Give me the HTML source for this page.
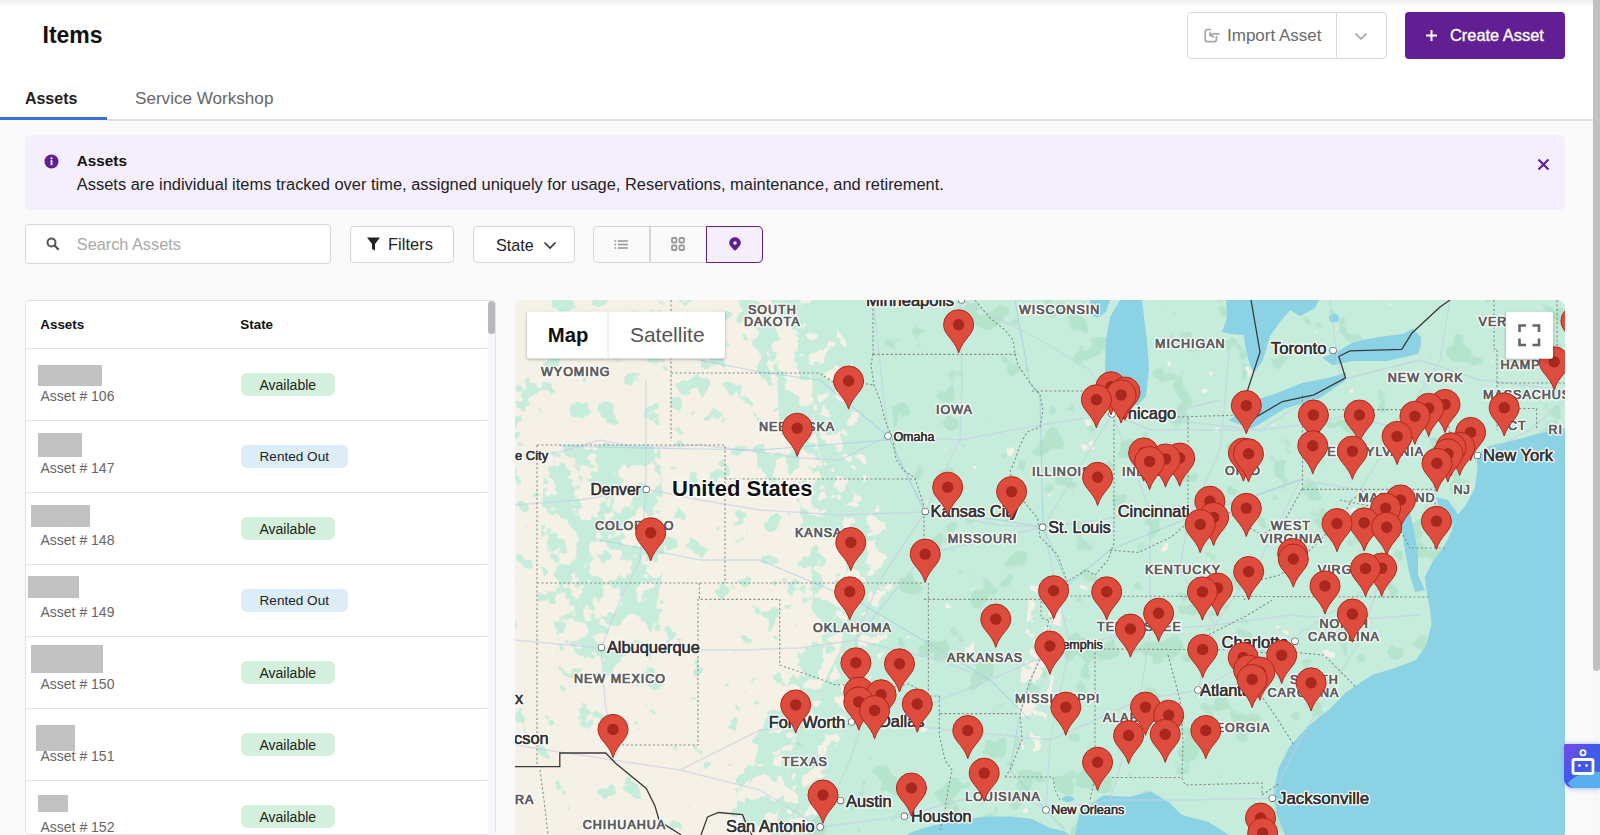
<!DOCTYPE html>
<html><head><meta charset="utf-8">
<style>
*{box-sizing:border-box;margin:0;padding:0}
html,body{width:1600px;height:835px;overflow:hidden;background:#fafafa;font-family:"Liberation Sans",sans-serif;color:#1f1f1f}
.a{position:absolute}
.t{position:absolute;line-height:1;white-space:nowrap}
.b{font-weight:bold}
</style></head>
<body>
<div class="a" style="left:0;top:0;width:1593px;height:120px;background:#fff"></div>
<div class="a" style="left:0;top:0;width:1593px;height:7px;background:linear-gradient(#ededed,#fbfbfb 70%,#fff)"></div>
<div class="t b" style="left:42.5px;top:24.1px;font-size:23px;color:#111;">Items</div>
<div class="a" style="left:1187px;top:12px;width:200px;height:47px;border:1px solid #dadada;border-radius:4px;background:#fff"></div>
<div class="a" style="left:1336px;top:13px;width:1px;height:45px;background:#dadada"></div>
<svg class="a" style="left:1203px;top:27px" width="18" height="17" viewBox="0 0 18 17"><path d="M7.5 2.5H4.2a2 2 0 0 0-2 2v8.1a2 2 0 0 0 2 2h7.2a2 2 0 0 0 2-2V9.6" fill="none" stroke="#a6a6a6" stroke-width="1.7" stroke-linecap="round"/><path d="M15.9 7.1C13 6.3 9.5 6.8 7 8.4M7.4 5.3L6.8 8.4L10.5 9.7" fill="none" stroke="#a6a6a6" stroke-width="1.7" stroke-linecap="round" stroke-linejoin="round"/></svg>
<div class="t " style="left:1227.0px;top:27.1px;font-size:17px;color:#6b6b6b;">Import Asset</div>
<svg class="a" style="left:1354px;top:32px" width="14" height="9" viewBox="0 0 14 9"><path d="M1.5 1.5l5.5 5.5 5.5-5.5" fill="none" stroke="#9a9a9a" stroke-width="1.5"/></svg>
<div class="a" style="left:1405px;top:12px;width:160px;height:47px;background:#611f93;border-radius:4px"></div>
<svg class="a" style="left:1425px;top:29px" width="13" height="13" viewBox="0 0 13 13"><path d="M6.5 1v11M1 6.5h11" stroke="#fff" stroke-width="2"/></svg>
<div class="t " style="left:1450.0px;top:27.1px;font-size:16.4px;color:#fff;-webkit-text-stroke:0.35px #fff;">Create Asset</div>
<div class="t b" style="left:24.9px;top:90.8px;font-size:16px;color:#222;">Assets</div>
<div class="t " style="left:135.0px;top:89.8px;font-size:17.1px;color:#666;">Service Workshop</div>
<div class="a" style="left:0;top:117px;width:107px;height:3px;background:#3a6fd6"></div>
<div class="a" style="left:107px;top:119px;width:1486px;height:2px;background:#e0e0e0"></div>
<div class="a" style="left:1593px;top:0;width:7px;height:835px;background:#f7f7f9"></div>
<div class="a" style="left:1593px;top:0;width:7px;height:671px;background:#c0c0c5;border-radius:0 0 4px 4px"></div>
<div class="a" style="left:25px;top:135px;width:1540px;height:75px;background:#f5effd;border-radius:5px"></div>
<svg class="a" style="left:44px;top:154px" width="15" height="15" viewBox="0 0 15 15"><circle cx="7.5" cy="7.5" r="7" fill="#611f93"/><circle cx="7.5" cy="4.3" r="1.1" fill="#fff"/><rect x="6.6" y="6.2" width="1.8" height="5" fill="#fff"/></svg>
<div class="t b" style="left:76.8px;top:152.8px;font-size:15.3px;color:#111;">Assets</div>
<div class="t " style="left:76.8px;top:175.6px;font-size:16.44px;color:#222;">Assets are individual items tracked over time, assigned uniquely for usage, Reservations, maintenance, and retirement.</div>
<svg class="a" style="left:1537px;top:158px" width="13" height="13" viewBox="0 0 13 13"><path d="M1.5 1.5l10 10M11.5 1.5l-10 10" stroke="#611f93" stroke-width="2.2"/></svg>
<div class="a" style="left:25px;top:224px;width:306px;height:40px;border:1px solid #d5d5d5;border-radius:4px;background:#fff"></div>
<svg class="a" style="left:46px;top:237px" width="14" height="14" viewBox="0 0 14 14"><circle cx="5.5" cy="5.5" r="4" fill="none" stroke="#555" stroke-width="2"/><path d="M8.5 8.5l4.2 4.2" stroke="#555" stroke-width="2.3"/></svg>
<div class="t " style="left:76.8px;top:236.2px;font-size:16.3px;color:#a9a9a9;">Search Assets</div>
<div class="a" style="left:350px;top:226px;width:104px;height:37px;border:1px solid #d5d5d5;border-radius:4px;background:#fff"></div>
<svg class="a" style="left:366px;top:236px" width="15" height="16" viewBox="0 0 15 16"><path d="M1 1.5h13L9 8v6.5L6 13V8z" fill="#222"/></svg>
<div class="t " style="left:388.0px;top:236.2px;font-size:16.5px;color:#222;">Filters</div>
<div class="a" style="left:473px;top:226px;width:102px;height:37px;border:1px solid #d5d5d5;border-radius:4px;background:#fff"></div>
<div class="t " style="left:496.0px;top:236.5px;font-size:16.2px;color:#222;">State</div>
<svg class="a" style="left:543px;top:241px" width="14" height="9" viewBox="0 0 14 9"><path d="M1.5 1.5l5.5 5.5 5.5-5.5" fill="none" stroke="#333" stroke-width="1.6"/></svg>
<div class="a" style="left:593px;top:226px;width:170px;height:37px;border:1px solid #d5d5d5;border-radius:4px;background:#fafafa"></div>
<div class="a" style="left:649px;top:227px;width:2px;height:35px;background:#d5d5d5"></div>
<div class="a" style="left:706px;top:226px;width:57px;height:37px;border:1.6px solid #611f93;border-radius:0 5px 5px 0;background:#f5effd"></div>
<svg class="a" style="left:614px;top:240px" width="14" height="9" viewBox="0 0 14 9"><g fill="#9a9a9a"><rect x="0.5" y="0.2" width="1.6" height="1.6"/><rect x="0.5" y="3.7" width="1.6" height="1.6"/><rect x="0.5" y="7.2" width="1.6" height="1.6"/><rect x="3.8" y="0.2" width="10" height="1.6"/><rect x="3.8" y="3.7" width="10" height="1.6"/><rect x="3.8" y="7.2" width="10" height="1.6"/></g></svg>
<svg class="a" style="left:671px;top:237px" width="14" height="14" viewBox="0 0 14 14"><g fill="none" stroke="#9a9a9a" stroke-width="1.8"><rect x="1" y="1" width="4.5" height="4.5" rx="1"/><rect x="8.5" y="1" width="4.5" height="4.5" rx="1"/><rect x="1" y="8.5" width="4.5" height="4.5" rx="1"/><rect x="8.5" y="8.5" width="4.5" height="4.5" rx="1"/></g></svg>
<svg class="a" style="left:728.5px;top:237px" width="12" height="14" viewBox="0 0 12 14"><path d="M6 0.2C2.8 0.2 0.2 2.7 0.2 5.8c0 3.6 5.8 8 5.8 8s5.8-4.4 5.8-8C11.8 2.7 9.2 0.2 6 0.2z" fill="#611f93"/><circle cx="6" cy="6" r="1.7" fill="#fff"/></svg>
<div class="a" style="left:25px;top:300px;width:471px;height:535px;background:#fff;border:1px solid #e2e2e2;border-radius:4px"></div>
<div class="a" style="left:488px;top:301px;width:7px;height:534px;background:#f6f6fa"></div>
<div class="a" style="left:488px;top:301px;width:7px;height:33px;background:#b8b8bc;border-radius:4px"></div>
<div class="t b" style="left:40.3px;top:318.4px;font-size:13.4px;color:#111;">Assets</div>
<div class="t b" style="left:240.3px;top:318.4px;font-size:13.4px;color:#111;">State</div>
<div class="a" style="left:26px;top:348px;width:462px;height:1px;background:#e3e3e3"></div>
<div class="a" style="left:38px;top:365px;width:64px;height:21px;background:#c2c2c2"></div>
<div class="t " style="left:40.5px;top:389.0px;font-size:14px;color:#666;">Asset # 106</div>
<div class="a" style="left:240.5px;top:372.8px;width:94px;height:23.5px;background:#d4f1dd;border-radius:6px"></div>
<div class="t " style="left:259.5px;top:377.5px;font-size:14px;color:#222;">Available</div>
<div class="a" style="left:26px;top:420px;width:462px;height:1px;background:#e3e3e3"></div>
<div class="a" style="left:38px;top:433px;width:44px;height:24px;background:#c2c2c2"></div>
<div class="t " style="left:40.5px;top:460.9px;font-size:14px;color:#666;">Asset # 147</div>
<div class="a" style="left:240.5px;top:444.8px;width:107px;height:23.5px;background:#dcedf8;border-radius:6px"></div>
<div class="t " style="left:259.5px;top:449.9px;font-size:13.6px;color:#222;">Rented Out</div>
<div class="a" style="left:26px;top:492px;width:462px;height:1px;background:#e3e3e3"></div>
<div class="a" style="left:31px;top:504.5px;width:59px;height:22.5px;background:#c2c2c2"></div>
<div class="t " style="left:40.5px;top:532.8px;font-size:14px;color:#666;">Asset # 148</div>
<div class="a" style="left:240.5px;top:516.8px;width:94px;height:23.5px;background:#d4f1dd;border-radius:6px"></div>
<div class="t " style="left:259.5px;top:521.5px;font-size:14px;color:#222;">Available</div>
<div class="a" style="left:26px;top:564px;width:462px;height:1px;background:#e3e3e3"></div>
<div class="a" style="left:28px;top:575.5px;width:51px;height:22.5px;background:#c2c2c2"></div>
<div class="t " style="left:40.5px;top:604.7px;font-size:14px;color:#666;">Asset # 149</div>
<div class="a" style="left:240.5px;top:588.8px;width:107px;height:23.5px;background:#dcedf8;border-radius:6px"></div>
<div class="t " style="left:259.5px;top:593.9px;font-size:13.6px;color:#222;">Rented Out</div>
<div class="a" style="left:26px;top:636px;width:462px;height:1px;background:#e3e3e3"></div>
<div class="a" style="left:31px;top:645px;width:71.5px;height:28px;background:#c2c2c2"></div>
<div class="t " style="left:40.5px;top:676.6px;font-size:14px;color:#666;">Asset # 150</div>
<div class="a" style="left:240.5px;top:660.8px;width:94px;height:23.5px;background:#d4f1dd;border-radius:6px"></div>
<div class="t " style="left:259.5px;top:665.5px;font-size:14px;color:#222;">Available</div>
<div class="a" style="left:26px;top:708px;width:462px;height:1px;background:#e3e3e3"></div>
<div class="a" style="left:35.5px;top:725px;width:39.0px;height:26px;background:#c2c2c2"></div>
<div class="t " style="left:40.5px;top:748.5px;font-size:14px;color:#666;">Asset # 151</div>
<div class="a" style="left:240.5px;top:732.8px;width:94px;height:23.5px;background:#d4f1dd;border-radius:6px"></div>
<div class="t " style="left:259.5px;top:737.5px;font-size:14px;color:#222;">Available</div>
<div class="a" style="left:26px;top:780px;width:462px;height:1px;background:#e3e3e3"></div>
<div class="a" style="left:38px;top:795px;width:29.5px;height:17px;background:#c2c2c2"></div>
<div class="t " style="left:40.5px;top:820.4px;font-size:14px;color:#666;">Asset # 152</div>
<div class="a" style="left:240.5px;top:804.8px;width:94px;height:23.5px;background:#d4f1dd;border-radius:6px"></div>
<div class="t " style="left:259.5px;top:809.5px;font-size:14px;color:#222;">Available</div>
<svg class="a" style="left:515px;top:300px" width="1050" height="535" viewBox="515 300 1050 535">
<defs><clipPath id="mc"><rect x="515" y="300" width="1050" height="540" rx="8"/></clipPath>
<path id="pin" d="M0 28.2C-2 21-6 16.5-10 11.5C-13 8-15 4-15 0A15 15 0 1 1 15 0C15 4 13 8 10 11.5C6 16.5 2 21 0 28.2Z"/>
</defs>
<g clip-path="url(#mc)">
<rect x="515" y="300" width="1050" height="535" fill="#f5f1e7"/>
<polygon points="770.0,300.0 800.0,340.0 812.0,380.0 815.0,430.0 825.0,480.0 845.0,540.0 848.0,600.0 840.0,650.0 820.0,690.0 800.0,720.0 790.0,760.0 780.0,800.0 775.0,835.0 1565.0,835.0 1565.0,300.0" fill="#c6ecdb"/>
<g id="west"></g>
<defs>
<filter id="g55" filterUnits="userSpaceOnUse" x="515" y="300" width="1050" height="535" color-interpolation-filters="sRGB"><feTurbulence type="fractalNoise" baseFrequency="0.045" numOctaves="3" seed="7"/><feColorMatrix type="matrix" values="0 0 0 0 0.776 0 0 0 0 0.925 0 0 0 0 0.859 25 0 0 0 -12.000"/><feComposite in2="SourceAlpha" operator="in"/></filter>
<filter id="g45" filterUnits="userSpaceOnUse" x="515" y="300" width="1050" height="535" color-interpolation-filters="sRGB"><feTurbulence type="fractalNoise" baseFrequency="0.045" numOctaves="3" seed="7"/><feColorMatrix type="matrix" values="0 0 0 0 0.776 0 0 0 0 0.925 0 0 0 0 0.859 25 0 0 0 -11.750"/><feComposite in2="SourceAlpha" operator="in"/></filter>
<filter id="g30" filterUnits="userSpaceOnUse" x="515" y="300" width="1050" height="535" color-interpolation-filters="sRGB"><feTurbulence type="fractalNoise" baseFrequency="0.045" numOctaves="3" seed="7"/><feColorMatrix type="matrix" values="0 0 0 0 0.776 0 0 0 0 0.925 0 0 0 0 0.859 25 0 0 0 -14.000"/><feComposite in2="SourceAlpha" operator="in"/></filter>
<filter id="g20" filterUnits="userSpaceOnUse" x="515" y="300" width="1050" height="535" color-interpolation-filters="sRGB"><feTurbulence type="fractalNoise" baseFrequency="0.045" numOctaves="3" seed="7"/><feColorMatrix type="matrix" values="0 0 0 0 0.776 0 0 0 0 0.925 0 0 0 0 0.859 25 0 0 0 -15.000"/><feComposite in2="SourceAlpha" operator="in"/></filter>
<filter id="g15" filterUnits="userSpaceOnUse" x="515" y="300" width="1050" height="535" color-interpolation-filters="sRGB"><feTurbulence type="fractalNoise" baseFrequency="0.045" numOctaves="3" seed="7"/><feColorMatrix type="matrix" values="0 0 0 0 0.776 0 0 0 0 0.925 0 0 0 0 0.859 25 0 0 0 -15.375"/><feComposite in2="SourceAlpha" operator="in"/></filter>
<filter id="g8" filterUnits="userSpaceOnUse" x="515" y="300" width="1050" height="535" color-interpolation-filters="sRGB"><feTurbulence type="fractalNoise" baseFrequency="0.045" numOctaves="3" seed="7"/><feColorMatrix type="matrix" values="0 0 0 0 0.776 0 0 0 0 0.925 0 0 0 0 0.859 25 0 0 0 -16.250"/><feComposite in2="SourceAlpha" operator="in"/></filter>
<filter id="g4" filterUnits="userSpaceOnUse" x="515" y="300" width="1050" height="535" color-interpolation-filters="sRGB"><feTurbulence type="fractalNoise" baseFrequency="0.045" numOctaves="3" seed="7"/><feColorMatrix type="matrix" values="0 0 0 0 0.776 0 0 0 0 0.925 0 0 0 0 0.859 25 0 0 0 -17.250"/><feComposite in2="SourceAlpha" operator="in"/></filter>
<filter id="b8" filterUnits="userSpaceOnUse" x="515" y="300" width="1050" height="535" color-interpolation-filters="sRGB"><feTurbulence type="fractalNoise" baseFrequency="0.05" numOctaves="3" seed="21"/><feColorMatrix type="matrix" values="0 0 0 0 0.961 0 0 0 0 0.945 0 0 0 0 0.906 25 0 0 0 -19.500"/><feComposite in2="SourceAlpha" operator="in"/></filter>
<filter id="dg" filterUnits="userSpaceOnUse" x="515" y="300" width="1050" height="535" color-interpolation-filters="sRGB"><feTurbulence type="fractalNoise" baseFrequency="0.03" numOctaves="3" seed="55"/><feColorMatrix type="matrix" values="0 0 0 0 0.71 0 0 0 0 0.894 0 0 0 0 0.8 25 0 0 0 -16.000"/><feComposite in2="SourceAlpha" operator="in"/></filter>
<filter id="b50" filterUnits="userSpaceOnUse" x="515" y="300" width="1050" height="535" color-interpolation-filters="sRGB"><feTurbulence type="fractalNoise" baseFrequency="0.06" numOctaves="3" seed="77"/><feColorMatrix type="matrix" values="0 0 0 0 0.961 0 0 0 0 0.945 0 0 0 0 0.906 25 0 0 0 -12.500"/><feComposite in2="SourceAlpha" operator="in"/></filter>
<filter id="b30" filterUnits="userSpaceOnUse" x="515" y="300" width="1050" height="535" color-interpolation-filters="sRGB"><feTurbulence type="fractalNoise" baseFrequency="0.06" numOctaves="3" seed="91"/><feColorMatrix type="matrix" values="0 0 0 0 0.961 0 0 0 0 0.945 0 0 0 0 0.906 25 0 0 0 -14.250"/><feComposite in2="SourceAlpha" operator="in"/></filter>
</defs>
<polygon points="515.0,300.0 671.0,300.0 671.0,445.0 515.0,445.0" fill="#000" filter="url(#g15)"/>
<polygon points="515.0,445.0 545.0,445.0 540.0,560.0 560.0,650.0 600.0,660.0 650.0,640.0 665.0,560.0 660.0,445.0 725.0,445.0 725.0,583.0 515.0,583.0" fill="#000" filter="url(#g8)"/>
<polygon points="545.0,445.0 660.0,445.0 665.0,560.0 650.0,640.0 600.0,660.0 560.0,650.0 540.0,560.0" fill="#000" filter="url(#g45)"/>
<polygon points="671.0,300.0 800.0,300.0 810.0,370.0 810.0,470.0 725.0,479.0 725.0,445.0 671.0,445.0" fill="#000" filter="url(#g20)"/>
<polygon points="725.0,479.0 820.0,479.0 820.0,583.0 725.0,583.0" fill="#000" filter="url(#g8)"/>
<polygon points="560.0,650.0 600.0,660.0 650.0,640.0 670.0,640.0 660.0,730.0 580.0,730.0" fill="#000" filter="url(#g20)"/>
<polygon points="515.0,583.0 725.0,583.0 700.0,640.0 670.0,640.0 650.0,640.0 600.0,660.0 560.0,650.0 580.0,730.0 660.0,730.0 700.0,760.0 515.0,760.0" fill="#000" filter="url(#g8)"/>
<polygon points="700.0,583.0 820.0,583.0 800.0,650.0 750.0,700.0 720.0,835.0 515.0,835.0 515.0,760.0 700.0,760.0 660.0,730.0 670.0,640.0 700.0,640.0" fill="#000" filter="url(#g4)"/>
<polygon points="695.0,300.0 725.0,340.0 737.0,380.0 740.0,430.0 750.0,480.0 770.0,540.0 773.0,600.0 765.0,650.0 745.0,690.0 725.0,720.0 715.0,760.0 705.0,800.0 700.0,835.0 740.0,835.0 745.0,800.0 755.0,760.0 765.0,720.0 785.0,690.0 805.0,650.0 813.0,600.0 810.0,540.0 790.0,480.0 780.0,430.0 777.0,380.0 765.0,340.0 735.0,300.0" fill="#000" filter="url(#g20)"/>
<polygon points="735.0,300.0 765.0,340.0 777.0,380.0 780.0,430.0 790.0,480.0 810.0,540.0 813.0,600.0 805.0,650.0 785.0,690.0 765.0,720.0 755.0,760.0 745.0,800.0 740.0,835.0 775.0,835.0 780.0,800.0 790.0,760.0 800.0,720.0 820.0,690.0 840.0,650.0 848.0,600.0 845.0,540.0 825.0,480.0 815.0,430.0 812.0,380.0 800.0,340.0 770.0,300.0" fill="#000" filter="url(#g55)"/>
<polygon points="880.0,300.0 1565.0,300.0 1565.0,835.0 785.0,835.0 800.0,720.0 870.0,680.0 900.0,600.0 900.0,480.0" fill="#000" filter="url(#dg)"/>
<polygon points="880.0,300.0 1565.0,300.0 1565.0,835.0 785.0,835.0 800.0,720.0 870.0,680.0 900.0,600.0 900.0,480.0" fill="#000" filter="url(#b8)"/>
<polygon points="1030.0,585.0 1062.0,590.0 1060.0,640.0 1050.0,700.0 1040.0,750.0 1022.0,755.0 1018.0,700.0 1025.0,640.0" fill="#000" filter="url(#b50)"/>
<polygon points="770.0,300.0 800.0,340.0 812.0,380.0 815.0,430.0 825.0,480.0 845.0,540.0 848.0,600.0 840.0,650.0 820.0,690.0 800.0,720.0 790.0,760.0 780.0,800.0 775.0,835.0 820.0,835.0 825.0,800.0 835.0,760.0 845.0,720.0 865.0,690.0 885.0,650.0 893.0,600.0 890.0,540.0 870.0,480.0 860.0,430.0 857.0,380.0 845.0,340.0 815.0,300.0" fill="#000" filter="url(#b30)"/>
<polygon points="1565.0,428.0 1535.0,434.5 1515.0,440.0 1486.0,447.0 1476.0,457.5 1477.5,466.4 1475.0,487.4 1467.0,503.3 1456.4,516.4 1451.0,532.2 1443.3,548.0 1432.7,561.2 1424.8,577.0 1426.0,587.6 1430.0,608.7 1431.4,624.5 1426.0,645.6 1416.0,660.0 1395.0,668.0 1372.5,674.7 1346.3,692.0 1328.8,709.7 1306.9,727.2 1289.4,746.9 1278.4,768.8 1274.0,790.6 1276.3,812.5 1285.0,835.0 1565.0,835.0" fill="#8cd2e5"/>
<polygon points="906.0,835.0 915.0,831.0 932.5,825.6 958.7,820.4 985.0,816.4 1011.0,816.4 1032.0,819.0 1050.6,828.2 1063.7,830.9 1070.0,835.0" fill="#8cd2e5"/>
<polygon points="1075.0,835.0 1079.5,812.5 1103.0,795.4 1129.3,796.7 1150.3,791.5 1168.7,802.0 1181.8,815.0 1208.0,821.7 1229.0,835.0" fill="#8cd2e5"/>
<polygon points="1404.0,506.0 1409.0,508.0 1414.0,530.0 1418.0,555.0 1418.0,575.0 1425.0,590.0 1415.0,592.0 1409.0,572.0 1404.0,545.0 1401.0,520.0" fill="#8cd2e5"/>
<polygon points="1436.0,497.0 1448.0,500.0 1458.0,514.0 1452.0,526.0 1441.0,514.0" fill="#8cd2e5"/>
<polygon points="1120.0,300.0 1142.0,300.0 1144.0,317.0 1147.0,340.0 1149.0,369.0 1146.0,396.0 1138.0,405.0 1122.0,405.0 1108.0,395.0 1105.0,369.0 1106.0,340.0 1110.0,317.0" fill="#8cd2e5"/>
<polygon points="1090.0,300.0 1110.0,300.0 1106.0,312.0 1097.0,318.0 1090.0,314.0" fill="#8cd2e5"/>
<polygon points="1226.0,300.0 1319.0,300.0 1315.0,308.0 1300.0,316.0 1290.0,310.0 1280.0,322.0 1270.0,336.0 1266.0,350.0 1262.0,362.0 1254.0,372.0 1250.0,366.0 1245.0,345.0 1244.0,335.0 1230.0,334.0 1222.0,332.0 1227.0,318.0" fill="#8cd2e5"/>
<polygon points="1229.0,420.5 1251.0,429.0 1285.0,408.6 1319.0,398.4 1344.6,381.3 1346.3,372.8 1327.6,378.0 1302.0,383.0 1276.5,393.3 1256.0,400.0 1242.5,410.3" fill="#8cd2e5"/>
<polygon points="1322.5,357.5 1336.0,352.4 1353.0,342.2 1378.6,337.1 1404.0,333.7 1412.6,328.6 1421.0,337.0 1421.0,345.0 1417.7,354.0 1387.0,361.0 1353.0,361.0 1332.7,365.2" fill="#8cd2e5"/>
<ellipse cx="1334" cy="318" rx="5" ry="4.5" fill="#8cd2e5"/>
<ellipse cx="1068" cy="799" rx="6" ry="3" fill="#8cd2e5"/>
<g fill="none" stroke="#c4cfe6" stroke-width="1.4" stroke-linejoin="round" opacity="0.6">
<polyline points="515.0,455.0 560.0,452.0 600.0,440.0 640.0,448.0 700.0,445.0 760.0,452.0 800.0,458.0 840.0,460.0 888.0,436.0 960.0,440.0 1040.0,425.0 1112.0,414.0 1170.0,420.0 1260.0,430.0 1300.0,425.0 1350.0,415.0 1420.0,435.0 1477.0,456.0"/>
<polyline points="515.0,505.0 580.0,500.0 646.0,489.0 700.0,500.0 760.0,510.0 840.0,515.0 925.0,512.0 1000.0,525.0 1043.0,527.0 1100.0,520.0 1150.0,510.0 1245.0,500.0 1300.0,480.0 1360.0,490.0 1410.0,505.0"/>
<polyline points="515.0,640.0 601.0,648.0 680.0,650.0 740.0,650.0 800.0,648.0 855.0,640.0 940.0,660.0 990.0,680.0 1070.0,645.0 1150.0,630.0 1215.0,625.0 1290.0,615.0 1350.0,620.0 1420.0,615.0"/>
<polyline points="515.0,745.0 560.0,752.0 613.0,760.0 680.0,770.0 760.0,790.0 820.0,827.0 904.0,816.0 960.0,800.0 1020.0,795.0 1046.0,810.0 1110.0,800.0 1190.0,800.0 1272.0,798.0"/>
<polyline points="680.0,770.0 760.0,730.0 885.0,722.0 950.0,730.0 1050.0,740.0 1140.0,700.0 1198.0,690.0 1263.0,680.0 1320.0,670.0"/>
<polyline points="960.0,299.0 962.0,380.0 960.0,440.0 940.0,480.0 925.0,512.0 880.0,580.0 855.0,640.0 870.0,700.0 850.0,760.0 820.0,827.0"/>
<polyline points="646.0,380.0 646.0,489.0 640.0,560.0 620.0,600.0 601.0,648.0 605.0,700.0 613.0,760.0"/>
<polyline points="1198.0,690.0 1215.0,625.0 1180.0,570.0 1188.0,518.0 1220.0,450.0 1225.0,400.0 1230.0,340.0"/>
<polyline points="1112.0,414.0 1150.0,510.0 1150.0,555.0 1150.0,630.0 1140.0,700.0 1110.0,800.0"/>
<polyline points="1272.0,798.0 1300.0,740.0 1330.0,690.0 1360.0,640.0 1380.0,580.0 1395.0,520.0 1440.0,480.0 1477.0,456.0 1530.0,430.0 1565.0,400.0"/>
<polyline points="1112.0,414.0 1150.0,430.0 1260.0,430.0 1340.0,380.0 1420.0,360.0 1480.0,380.0 1565.0,390.0"/>
<polyline points="1112.0,414.0 1043.0,527.0 1070.0,645.0 1050.0,740.0 1046.0,810.0"/>
<polyline points="960.0,299.0 1040.0,340.0 1090.0,370.0 1112.0,414.0 1180.0,410.0 1220.0,400.0"/>
<polyline points="873.0,300.0 888.0,436.0 925.0,512.0"/>
<polyline points="1043.0,527.0 925.0,554.0 855.0,640.0"/>
<polyline points="885.0,722.0 990.0,680.0"/>
<polyline points="1198.0,690.0 1287.0,642.0 1380.0,580.0"/>
<polyline points="1300.0,480.0 1260.0,560.0 1215.0,625.0"/>
<polyline points="1340.0,380.0 1330.0,300.0"/>
<polyline points="1360.0,490.0 1440.0,360.0 1450.0,300.0"/>
</g>
<g fill="none" stroke="#9fcbe6" stroke-width="1.2" stroke-linejoin="round" opacity="0.6">
<polyline points="700.0,360.0 760.0,372.0 820.0,380.0 888.0,436.0 925.0,512.0 1000.0,520.0 1043.0,527.0"/>
<polyline points="1015.0,300.0 1030.0,383.0 1040.0,395.0 1043.0,527.0 1068.0,585.0 1045.0,640.0 1020.0,713.0 1010.0,770.0 1046.0,810.0 1065.0,830.0"/>
<polyline points="1068.0,585.0 1110.0,550.0 1188.0,518.0 1300.0,480.0"/>
<polyline points="600.0,540.0 700.0,560.0 760.0,560.0 855.0,600.0 940.0,650.0 990.0,680.0 1030.0,720.0"/>
<polyline points="560.0,446.0 640.0,448.0 760.0,450.0 888.0,440.0"/>
</g>
<g fill="none" stroke="#7d7d7d" stroke-width="1.1" stroke-dasharray="2.2 2.2" opacity="0.85">
<polyline points="671.0,300.0 671.0,441.0"/>
<polyline points="671.0,373.0 819.0,373.0 835.0,383.0 855.0,382.0 873.0,385.0"/>
<polyline points="873.0,300.0 873.0,354.0"/>
<polyline points="873.0,354.0 871.0,365.0 874.0,385.0 880.0,400.0 885.0,420.0 893.0,440.0 896.0,459.0 903.0,470.0 915.0,478.0 924.0,506.0 924.0,583.0"/>
<polyline points="873.0,354.4 1015.0,354.4"/>
<polyline points="975.0,300.0 990.0,318.0 1005.0,330.0 1013.0,340.0 1015.0,354.0"/>
<polyline points="1015.0,354.0 1018.0,365.0 1030.0,383.0 1040.0,395.0 1043.0,410.0 1040.0,427.0 1027.0,432.0 1020.0,445.0 1015.0,460.0 1010.0,472.0 1012.0,480.0 1022.5,500.0 1037.8,518.5 1040.0,537.0 1057.5,554.6 1063.0,569.9 1068.5,585.2 1057.5,596.0 1055.0,613.6 1048.8,620.2 1045.0,640.0 1040.0,660.0 1030.0,680.0 1020.0,713.0 1022.0,740.0 1010.0,770.0 1005.0,777.0"/>
<polyline points="1032.0,391.0 1106.0,391.0"/>
<polyline points="1114.0,420.0 1114.0,543.0 1108.0,560.0 1095.0,575.0 1086.0,570.0 1068.5,580.8"/>
<polyline points="1110.0,550.2 1138.5,552.4 1171.3,537.0 1188.8,521.8 1205.0,505.0 1215.0,500.0 1240.0,522.0 1262.0,535.0 1285.0,520.0 1302.0,489.0"/>
<polyline points="1147.0,418.0 1240.0,415.0"/>
<polyline points="1188.0,418.0 1188.0,514.0"/>
<polyline points="1057.0,596.0 1429.0,597.0"/>
<polyline points="1042.0,648.6 1227.5,649.8"/>
<polyline points="1208.9,634.7 1246.0,616.0 1272.0,600.2"/>
<polyline points="1243.0,653.0 1290.0,652.0 1324.0,655.0 1357.0,688.0"/>
<polyline points="1263.0,698.0 1278.0,720.0 1294.0,745.0"/>
<polyline points="1168.0,655.0 1180.0,700.0 1183.0,740.0 1182.0,777.0"/>
<polyline points="1112.0,777.5 1182.0,777.5 1185.0,785.0 1262.0,783.0 1262.0,795.0 1280.0,783.0"/>
<polyline points="1095.0,648.0 1095.0,777.0 1090.0,800.0"/>
<polyline points="1005.0,777.0 1053.0,777.0 1055.0,790.0 1060.0,800.0"/>
<polyline points="940.0,713.6 1018.0,713.6"/>
<polyline points="939.3,696.0 939.3,735.0 945.0,760.0 952.0,770.0 948.0,790.0 945.0,810.0 940.0,830.0"/>
<polyline points="779.7,599.0 779.7,665.0 800.0,672.0 820.0,678.9 834.4,684.6 860.0,685.0 880.0,690.0 909.1,683.9 929.2,696.0 939.3,696.0"/>
<polyline points="928.4,583.0 928.4,696.0"/>
<polyline points="537.0,583.0 924.0,583.0"/>
<polyline points="924.0,599.4 1041.0,599.4 1041.0,618.0 1048.8,620.2"/>
<polyline points="725.0,479.0 915.0,479.0"/>
<polyline points="537.0,445.0 725.0,445.0 725.0,583.0"/>
<polyline points="537.0,445.0 537.0,766.0"/>
<polyline points="622.0,745.0 698.0,745.0 698.0,599.0"/>
<polyline points="699.4,583.0 699.4,599.4 779.7,599.4"/>
<polyline points="1302.5,409.6 1442.5,409.6"/>
<polyline points="1302.5,395.0 1302.5,489.0"/>
<polyline points="1302.5,489.4 1434.0,489.4"/>
<polyline points="1442.0,410.0 1450.0,430.0 1440.0,460.0 1434.0,489.0"/>
<polyline points="1494.0,300.0 1494.0,349.0 1497.0,349.0 1497.0,430.0"/>
<polyline points="1557.0,300.0 1557.0,383.0"/>
<polyline points="1497.0,383.0 1565.0,383.0"/>
<polyline points="1497.0,408.5 1536.6,408.5 1536.6,430.0"/>
<polyline points="1244.0,600.0 1260.0,580.0 1280.0,575.0 1300.0,560.0 1320.0,540.0 1340.0,520.0 1352.0,500.0 1365.0,490.0"/>
<polyline points="1340.0,500.0 1390.0,510.0 1410.0,548.0"/>
<polyline points="1412.0,548.0 1447.0,548.0"/>
<polyline points="1435.0,489.0 1435.0,548.0"/>
<polyline points="540.0,770.0 544.0,800.0 548.0,835.0"/>
</g>
<g fill="none" stroke="#3a3a3a" stroke-width="1.3">
<polyline points="1251.0,300.0 1260.0,352.0 1247.6,390.3 1255.5,417.3 1282.5,401.5 1314.0,394.8 1345.5,377.9 1341.0,363.3 1338.8,356.5 1350.0,350.9 1401.8,349.3 1412.0,332.9 1440.0,307.0 1450.0,300.0"/>
<polyline points="515.0,766.6 559.8,766.6 559.8,753.0 605.8,753.0 615.6,763.3 646.3,788.4 655.0,806.0 659.4,821.3 681.3,835.0"/>
<polyline points="701.0,835.0 707.5,817.0 718.5,812.5 742.5,814.7 747.0,825.6 752.0,835.0"/>
</g>
<g font-family="Liberation Sans" stroke="#fff" stroke-width="3" stroke-linejoin="round" paint-order="stroke">
<text x="748.0" y="314.1" font-size="12.5" letter-spacing="1.0" fill="#5e5e5e">SOUTH</text>
<text x="744.0" y="326.1" font-size="12.5" letter-spacing="1.0" fill="#5e5e5e">DAKOTA</text>
<text x="541.0" y="376.1" font-size="12.5" letter-spacing="1.0" fill="#5e5e5e">WYOMING</text>
<text x="1019.0" y="314.1" font-size="12.5" letter-spacing="1.0" fill="#5e5e5e">WISCONSIN</text>
<text x="1155.0" y="348.1" font-size="12.5" letter-spacing="1.0" fill="#5e5e5e">MICHIGAN</text>
<text x="936.0" y="413.9" font-size="12.5" letter-spacing="1.0" fill="#5e5e5e">IOWA</text>
<text x="759.0" y="431.1" font-size="12.5" letter-spacing="1.0" fill="#5e5e5e">NEBRASKA</text>
<text x="1032.0" y="476.1" font-size="12.5" letter-spacing="1.0" fill="#5e5e5e">ILLINOIS</text>
<text x="1122.0" y="476.1" font-size="12.5" letter-spacing="1.0" fill="#5e5e5e">INDIANA</text>
<text x="1225.0" y="475.1" font-size="12.5" letter-spacing="1.0" fill="#5e5e5e">OHIO</text>
<text x="594.9" y="530.4" font-size="12.5" letter-spacing="1.0" fill="#5e5e5e">COLORADO</text>
<text x="795.0" y="537.4" font-size="12.5" letter-spacing="1.0" fill="#5e5e5e">KANSAS</text>
<text x="947.7" y="542.9" font-size="12.5" letter-spacing="1.0" fill="#5e5e5e">MISSOURI</text>
<text x="1145.0" y="574.1" font-size="12.5" letter-spacing="1.0" fill="#5e5e5e">KENTUCKY</text>
<text x="813.0" y="631.5" font-size="12.5" letter-spacing="1.0" fill="#5e5e5e">OKLAHOMA</text>
<text x="1097.0" y="631.1" font-size="12.5" letter-spacing="1.0" fill="#5e5e5e">TENNESSEE</text>
<text x="947.0" y="662.1" font-size="12.5" letter-spacing="1.0" fill="#5e5e5e">ARKANSAS</text>
<text x="574.0" y="683.4" font-size="12.5" letter-spacing="1.0" fill="#5e5e5e">NEW MEXICO</text>
<text x="1015.0" y="703.1" font-size="12.5" letter-spacing="1.0" fill="#5e5e5e">MISSISSIPPI</text>
<text x="1103.0" y="722.1" font-size="12.5" letter-spacing="1.0" fill="#5e5e5e">ALABAMA</text>
<text x="781.9" y="765.8" font-size="12.5" letter-spacing="1.0" fill="#5e5e5e">TEXAS</text>
<text x="965.2" y="800.8" font-size="12.5" letter-spacing="1.0" fill="#5e5e5e">LOUISIANA</text>
<text x="582.8" y="829.1" font-size="12.5" letter-spacing="1.0" fill="#5e5e5e">CHIHUAHUA</text>
<text x="515.0" y="804.1" font-size="12.5" letter-spacing="1.0" fill="#5e5e5e">RA</text>
<text x="1387.8" y="381.5" font-size="12.5" letter-spacing="1.0" fill="#5e5e5e">NEW YORK</text>
<text x="1478.6" y="326.1" font-size="12.5" letter-spacing="1.0" fill="#5e5e5e">VER</text>
<text x="1500.5" y="369.4" font-size="12.5" letter-spacing="1.0" fill="#5e5e5e">HAMP</text>
<text x="1483.0" y="399.0" font-size="12.5" letter-spacing="1.0" fill="#5e5e5e">MASSACHUS</text>
<text x="1548.6" y="434.0" font-size="12.5" letter-spacing="1.0" fill="#5e5e5e">RI</text>
<text x="1318.0" y="456.1" font-size="12.5" letter-spacing="1.0" fill="#5e5e5e">PENNSYLVANIA</text>
<text x="1508.0" y="429.6" font-size="12.5" letter-spacing="1.0" fill="#5e5e5e">CT</text>
<text x="1453.5" y="493.7" font-size="12.5" letter-spacing="1.0" fill="#5e5e5e">NJ</text>
<text x="1358.3" y="502.0" font-size="12.5" letter-spacing="1.0" fill="#5e5e5e">MARYLAND</text>
<text x="1270.8" y="530.4" font-size="12.5" letter-spacing="1.0" fill="#5e5e5e">WEST</text>
<text x="1260.0" y="542.9" font-size="12.5" letter-spacing="1.0" fill="#5e5e5e">VIRGINIA</text>
<text x="1317.8" y="573.5" font-size="12.5" letter-spacing="1.0" fill="#5e5e5e">VIRGINIA</text>
<text x="1319.6" y="628.1" font-size="12.5" letter-spacing="1.0" fill="#5e5e5e">NORTH</text>
<text x="1308.0" y="641.3" font-size="12.5" letter-spacing="1.0" fill="#5e5e5e">CAROLINA</text>
<text x="1290.0" y="683.8" font-size="12.5" letter-spacing="1.0" fill="#5e5e5e">SOUTH</text>
<text x="1267.5" y="696.5" font-size="12.5" letter-spacing="1.0" fill="#5e5e5e">CAROLINA</text>
<text x="1205.0" y="731.9" font-size="12.5" letter-spacing="1.0" fill="#5e5e5e">GEORGIA</text>
<text x="866.0" y="305.5" font-size="16.5" fill="#333">Minneapolis</text>
<circle cx="961.5" cy="300.0" r="3" fill="#fff" stroke="#444" stroke-width="1.2"/>
<text x="893.4" y="440.6" font-size="12.5" fill="#333">Omaha</text>
<circle cx="888.0" cy="436.0" r="3" fill="#fff" stroke="#444" stroke-width="1.2"/>
<text x="1116.0" y="419.4" font-size="16.4" fill="#333">Chicago</text>
<circle cx="1112.0" cy="414.0" r="3" fill="#fff" stroke="#444" stroke-width="1.2"/>
<text x="1270.8" y="354.4" font-size="16.7" fill="#333">Toronto</text>
<circle cx="1333.0" cy="350.5" r="3" fill="#fff" stroke="#444" stroke-width="1.2"/>
<text x="1483.0" y="461.0" font-size="16.6" fill="#333">New York</text>
<circle cx="1477.5" cy="455.5" r="3" fill="#fff" stroke="#444" stroke-width="1.2"/>
<text x="590.5" y="495.0" font-size="15.6" fill="#333">Denver</text>
<circle cx="646.3" cy="489.4" r="3" fill="#fff" stroke="#444" stroke-width="1.2"/>
<text x="672.0" y="496.0" font-size="22" fill="#111" font-weight="bold">United States</text>
<text x="515.0" y="460.0" font-size="13" fill="#333">e City</text>
<text x="930.6" y="517.4" font-size="16.4" fill="#333">Kansas City</text>
<circle cx="925.2" cy="511.6" r="3" fill="#fff" stroke="#444" stroke-width="1.2"/>
<text x="1048.3" y="532.7" font-size="16.1" fill="#333">St. Louis</text>
<circle cx="1042.6" cy="527.2" r="3" fill="#fff" stroke="#444" stroke-width="1.2"/>
<text x="1117.7" y="517.4" font-size="16.4" fill="#333">Cincinnati</text>
<text x="606.9" y="652.6" font-size="16.4" fill="#333">Albuquerque</text>
<circle cx="601.4" cy="647.6" r="3" fill="#fff" stroke="#444" stroke-width="1.2"/>
<text x="1052.0" y="648.6" font-size="12.5" fill="#333">Memphis</text>
<text x="1221.6" y="647.5" font-size="16.5" fill="#333">Charlotte</text>
<circle cx="1295.0" cy="641.3" r="3" fill="#fff" stroke="#444" stroke-width="1.2"/>
<text x="1200.0" y="696.0" font-size="16.4" fill="#333">Atlanta</text>
<circle cx="1198.0" cy="690.0" r="3" fill="#fff" stroke="#444" stroke-width="1.2"/>
<text x="768.8" y="727.6" font-size="16.3" fill="#333">Fort Worth</text>
<circle cx="851.5" cy="722.0" r="3" fill="#fff" stroke="#444" stroke-width="1.2"/>
<text x="879.0" y="727.0" font-size="16.4" fill="#333">Dallas</text>
<text x="495.5" y="743.6" font-size="16.4" fill="#333">Tucson</text>
<text x="464.0" y="704.0" font-size="16.4" fill="#333">Phoenix</text>
<text x="726.0" y="832.2" font-size="16.45" fill="#333">San Antonio</text>
<circle cx="820.2" cy="826.9" r="3" fill="#fff" stroke="#444" stroke-width="1.2"/>
<text x="846.0" y="806.7" font-size="16.4" fill="#333">Austin</text>
<circle cx="840.5" cy="800.6" r="3" fill="#fff" stroke="#444" stroke-width="1.2"/>
<text x="911.0" y="821.7" font-size="16.3" fill="#333">Houston</text>
<circle cx="904.4" cy="816.2" r="3" fill="#fff" stroke="#444" stroke-width="1.2"/>
<text x="1051.0" y="814.3" font-size="12.7" fill="#333">New Orleans</text>
<circle cx="1046.0" cy="810.0" r="3" fill="#fff" stroke="#444" stroke-width="1.2"/>
<text x="1278.0" y="804.4" font-size="16.9" fill="#333">Jacksonville</text>
<circle cx="1272.3" cy="798.3" r="3" fill="#fff" stroke="#444" stroke-width="1.2"/>
</g>
<g font-family="Liberation Sans" stroke="#333" stroke-width="0.45"><text x="866.0" y="305.5" font-size="16.5" fill="#333">Minneapolis</text>
<text x="893.4" y="440.6" font-size="12.5" fill="#333">Omaha</text>
<text x="1116.0" y="419.4" font-size="16.4" fill="#333">Chicago</text>
<text x="1270.8" y="354.4" font-size="16.7" fill="#333">Toronto</text>
<text x="1483.0" y="461.0" font-size="16.6" fill="#333">New York</text>
<text x="590.5" y="495.0" font-size="15.6" fill="#333">Denver</text>
<text x="515.0" y="460.0" font-size="13" fill="#333">e City</text>
<text x="930.6" y="517.4" font-size="16.4" fill="#333">Kansas City</text>
<text x="1048.3" y="532.7" font-size="16.1" fill="#333">St. Louis</text>
<text x="1117.7" y="517.4" font-size="16.4" fill="#333">Cincinnati</text>
<text x="606.9" y="652.6" font-size="16.4" fill="#333">Albuquerque</text>
<text x="1052.0" y="648.6" font-size="12.5" fill="#333">Memphis</text>
<text x="1221.6" y="647.5" font-size="16.5" fill="#333">Charlotte</text>
<text x="1200.0" y="696.0" font-size="16.4" fill="#333">Atlanta</text>
<text x="768.8" y="727.6" font-size="16.3" fill="#333">Fort Worth</text>
<text x="879.0" y="727.0" font-size="16.4" fill="#333">Dallas</text>
<text x="495.5" y="743.6" font-size="16.4" fill="#333">Tucson</text>
<text x="464.0" y="704.0" font-size="16.4" fill="#333">Phoenix</text>
<text x="726.0" y="832.2" font-size="16.45" fill="#333">San Antonio</text>
<text x="846.0" y="806.7" font-size="16.4" fill="#333">Austin</text>
<text x="911.0" y="821.7" font-size="16.3" fill="#333">Houston</text>
<text x="1051.0" y="814.3" font-size="12.7" fill="#333">New Orleans</text>
<text x="1278.0" y="804.4" font-size="16.9" fill="#333">Jacksonville</text>
</g>
<g font-family="Liberation Sans" stroke="#5e5e5e" stroke-width="0.7"><text x="748.0" y="314.1" font-size="12.5" letter-spacing="1.0" fill="#5e5e5e">SOUTH</text>
<text x="744.0" y="326.1" font-size="12.5" letter-spacing="1.0" fill="#5e5e5e">DAKOTA</text>
<text x="541.0" y="376.1" font-size="12.5" letter-spacing="1.0" fill="#5e5e5e">WYOMING</text>
<text x="1019.0" y="314.1" font-size="12.5" letter-spacing="1.0" fill="#5e5e5e">WISCONSIN</text>
<text x="1155.0" y="348.1" font-size="12.5" letter-spacing="1.0" fill="#5e5e5e">MICHIGAN</text>
<text x="936.0" y="413.9" font-size="12.5" letter-spacing="1.0" fill="#5e5e5e">IOWA</text>
<text x="759.0" y="431.1" font-size="12.5" letter-spacing="1.0" fill="#5e5e5e">NEBRASKA</text>
<text x="1032.0" y="476.1" font-size="12.5" letter-spacing="1.0" fill="#5e5e5e">ILLINOIS</text>
<text x="1122.0" y="476.1" font-size="12.5" letter-spacing="1.0" fill="#5e5e5e">INDIANA</text>
<text x="1225.0" y="475.1" font-size="12.5" letter-spacing="1.0" fill="#5e5e5e">OHIO</text>
<text x="594.9" y="530.4" font-size="12.5" letter-spacing="1.0" fill="#5e5e5e">COLORADO</text>
<text x="795.0" y="537.4" font-size="12.5" letter-spacing="1.0" fill="#5e5e5e">KANSAS</text>
<text x="947.7" y="542.9" font-size="12.5" letter-spacing="1.0" fill="#5e5e5e">MISSOURI</text>
<text x="1145.0" y="574.1" font-size="12.5" letter-spacing="1.0" fill="#5e5e5e">KENTUCKY</text>
<text x="813.0" y="631.5" font-size="12.5" letter-spacing="1.0" fill="#5e5e5e">OKLAHOMA</text>
<text x="1097.0" y="631.1" font-size="12.5" letter-spacing="1.0" fill="#5e5e5e">TENNESSEE</text>
<text x="947.0" y="662.1" font-size="12.5" letter-spacing="1.0" fill="#5e5e5e">ARKANSAS</text>
<text x="574.0" y="683.4" font-size="12.5" letter-spacing="1.0" fill="#5e5e5e">NEW MEXICO</text>
<text x="1015.0" y="703.1" font-size="12.5" letter-spacing="1.0" fill="#5e5e5e">MISSISSIPPI</text>
<text x="1103.0" y="722.1" font-size="12.5" letter-spacing="1.0" fill="#5e5e5e">ALABAMA</text>
<text x="781.9" y="765.8" font-size="12.5" letter-spacing="1.0" fill="#5e5e5e">TEXAS</text>
<text x="965.2" y="800.8" font-size="12.5" letter-spacing="1.0" fill="#5e5e5e">LOUISIANA</text>
<text x="582.8" y="829.1" font-size="12.5" letter-spacing="1.0" fill="#5e5e5e">CHIHUAHUA</text>
<text x="515.0" y="804.1" font-size="12.5" letter-spacing="1.0" fill="#5e5e5e">RA</text>
<text x="1387.8" y="381.5" font-size="12.5" letter-spacing="1.0" fill="#5e5e5e">NEW YORK</text>
<text x="1478.6" y="326.1" font-size="12.5" letter-spacing="1.0" fill="#5e5e5e">VER</text>
<text x="1500.5" y="369.4" font-size="12.5" letter-spacing="1.0" fill="#5e5e5e">HAMP</text>
<text x="1483.0" y="399.0" font-size="12.5" letter-spacing="1.0" fill="#5e5e5e">MASSACHUS</text>
<text x="1548.6" y="434.0" font-size="12.5" letter-spacing="1.0" fill="#5e5e5e">RI</text>
<text x="1318.0" y="456.1" font-size="12.5" letter-spacing="1.0" fill="#5e5e5e">PENNSYLVANIA</text>
<text x="1508.0" y="429.6" font-size="12.5" letter-spacing="1.0" fill="#5e5e5e">CT</text>
<text x="1453.5" y="493.7" font-size="12.5" letter-spacing="1.0" fill="#5e5e5e">NJ</text>
<text x="1358.3" y="502.0" font-size="12.5" letter-spacing="1.0" fill="#5e5e5e">MARYLAND</text>
<text x="1270.8" y="530.4" font-size="12.5" letter-spacing="1.0" fill="#5e5e5e">WEST</text>
<text x="1260.0" y="542.9" font-size="12.5" letter-spacing="1.0" fill="#5e5e5e">VIRGINIA</text>
<text x="1317.8" y="573.5" font-size="12.5" letter-spacing="1.0" fill="#5e5e5e">VIRGINIA</text>
<text x="1319.6" y="628.1" font-size="12.5" letter-spacing="1.0" fill="#5e5e5e">NORTH</text>
<text x="1308.0" y="641.3" font-size="12.5" letter-spacing="1.0" fill="#5e5e5e">CAROLINA</text>
<text x="1290.0" y="683.8" font-size="12.5" letter-spacing="1.0" fill="#5e5e5e">SOUTH</text>
<text x="1267.5" y="696.5" font-size="12.5" letter-spacing="1.0" fill="#5e5e5e">CAROLINA</text>
<text x="1205.0" y="731.9" font-size="12.5" letter-spacing="1.0" fill="#5e5e5e">GEORGIA</text>
</g>
<g>
<use href="#pin" x="1576.0" y="321.0" fill="#dd4c3d" stroke="#b3261b" stroke-width="1"/><circle cx="1576.0" cy="321.0" r="5.7" fill="#a8281e"/>
<use href="#pin" x="958.6" y="324.7" fill="#dd4c3d" stroke="#b3261b" stroke-width="1"/><circle cx="958.6" cy="324.7" r="5.7" fill="#a8281e"/>
<use href="#pin" x="1554.2" y="361.8" fill="#dd4c3d" stroke="#b3261b" stroke-width="1"/><circle cx="1554.2" cy="361.8" r="5.7" fill="#a8281e"/>
<use href="#pin" x="848.6" y="381.0" fill="#dd4c3d" stroke="#b3261b" stroke-width="1"/><circle cx="848.6" cy="381.0" r="5.7" fill="#a8281e"/>
<use href="#pin" x="1111.0" y="386.7" fill="#dd4c3d" stroke="#b3261b" stroke-width="1"/><circle cx="1111.0" cy="386.7" r="5.7" fill="#a8281e"/>
<use href="#pin" x="1125.0" y="392.0" fill="#dd4c3d" stroke="#b3261b" stroke-width="1"/><circle cx="1125.0" cy="392.0" r="5.7" fill="#a8281e"/>
<use href="#pin" x="1121.1" y="394.9" fill="#dd4c3d" stroke="#b3261b" stroke-width="1"/><circle cx="1121.1" cy="394.9" r="5.7" fill="#a8281e"/>
<use href="#pin" x="1096.4" y="399.7" fill="#dd4c3d" stroke="#b3261b" stroke-width="1"/><circle cx="1096.4" cy="399.7" r="5.7" fill="#a8281e"/>
<use href="#pin" x="1445.0" y="404.4" fill="#dd4c3d" stroke="#b3261b" stroke-width="1"/><circle cx="1445.0" cy="404.4" r="5.7" fill="#a8281e"/>
<use href="#pin" x="1246.3" y="405.6" fill="#dd4c3d" stroke="#b3261b" stroke-width="1"/><circle cx="1246.3" cy="405.6" r="5.7" fill="#a8281e"/>
<use href="#pin" x="1504.2" y="407.8" fill="#dd4c3d" stroke="#b3261b" stroke-width="1"/><circle cx="1504.2" cy="407.8" r="5.7" fill="#a8281e"/>
<use href="#pin" x="1428.7" y="408.3" fill="#dd4c3d" stroke="#b3261b" stroke-width="1"/><circle cx="1428.7" cy="408.3" r="5.7" fill="#a8281e"/>
<use href="#pin" x="1313.4" y="415.0" fill="#dd4c3d" stroke="#b3261b" stroke-width="1"/><circle cx="1313.4" cy="415.0" r="5.7" fill="#a8281e"/>
<use href="#pin" x="1359.4" y="415.0" fill="#dd4c3d" stroke="#b3261b" stroke-width="1"/><circle cx="1359.4" cy="415.0" r="5.7" fill="#a8281e"/>
<use href="#pin" x="1414.9" y="416.2" fill="#dd4c3d" stroke="#b3261b" stroke-width="1"/><circle cx="1414.9" cy="416.2" r="5.7" fill="#a8281e"/>
<use href="#pin" x="797.2" y="428.2" fill="#dd4c3d" stroke="#b3261b" stroke-width="1"/><circle cx="797.2" cy="428.2" r="5.7" fill="#a8281e"/>
<use href="#pin" x="1470.6" y="432.4" fill="#dd4c3d" stroke="#b3261b" stroke-width="1"/><circle cx="1470.6" cy="432.4" r="5.7" fill="#a8281e"/>
<use href="#pin" x="1397.1" y="436.4" fill="#dd4c3d" stroke="#b3261b" stroke-width="1"/><circle cx="1397.1" cy="436.4" r="5.7" fill="#a8281e"/>
<use href="#pin" x="1312.8" y="445.7" fill="#dd4c3d" stroke="#b3261b" stroke-width="1"/><circle cx="1312.8" cy="445.7" r="5.7" fill="#a8281e"/>
<use href="#pin" x="1459.7" y="447.2" fill="#dd4c3d" stroke="#b3261b" stroke-width="1"/><circle cx="1459.7" cy="447.2" r="5.7" fill="#a8281e"/>
<use href="#pin" x="1451.0" y="447.7" fill="#dd4c3d" stroke="#b3261b" stroke-width="1"/><circle cx="1451.0" cy="447.7" r="5.7" fill="#a8281e"/>
<use href="#pin" x="1352.4" y="451.1" fill="#dd4c3d" stroke="#b3261b" stroke-width="1"/><circle cx="1352.4" cy="451.1" r="5.7" fill="#a8281e"/>
<use href="#pin" x="1143.7" y="452.9" fill="#dd4c3d" stroke="#b3261b" stroke-width="1"/><circle cx="1143.7" cy="452.9" r="5.7" fill="#a8281e"/>
<use href="#pin" x="1243.4" y="453.0" fill="#dd4c3d" stroke="#b3261b" stroke-width="1"/><circle cx="1243.4" cy="453.0" r="5.7" fill="#a8281e"/>
<use href="#pin" x="1447.9" y="453.8" fill="#dd4c3d" stroke="#b3261b" stroke-width="1"/><circle cx="1447.9" cy="453.8" r="5.7" fill="#a8281e"/>
<use href="#pin" x="1248.5" y="453.8" fill="#dd4c3d" stroke="#b3261b" stroke-width="1"/><circle cx="1248.5" cy="453.8" r="5.7" fill="#a8281e"/>
<use href="#pin" x="1179.7" y="458.0" fill="#dd4c3d" stroke="#b3261b" stroke-width="1"/><circle cx="1179.7" cy="458.0" r="5.7" fill="#a8281e"/>
<use href="#pin" x="1165.5" y="458.9" fill="#dd4c3d" stroke="#b3261b" stroke-width="1"/><circle cx="1165.5" cy="458.9" r="5.7" fill="#a8281e"/>
<use href="#pin" x="1149.6" y="461.4" fill="#dd4c3d" stroke="#b3261b" stroke-width="1"/><circle cx="1149.6" cy="461.4" r="5.7" fill="#a8281e"/>
<use href="#pin" x="1437.0" y="463.3" fill="#dd4c3d" stroke="#b3261b" stroke-width="1"/><circle cx="1437.0" cy="463.3" r="5.7" fill="#a8281e"/>
<use href="#pin" x="1097.6" y="477.3" fill="#dd4c3d" stroke="#b3261b" stroke-width="1"/><circle cx="1097.6" cy="477.3" r="5.7" fill="#a8281e"/>
<use href="#pin" x="947.7" y="487.2" fill="#dd4c3d" stroke="#b3261b" stroke-width="1"/><circle cx="947.7" cy="487.2" r="5.7" fill="#a8281e"/>
<use href="#pin" x="1011.6" y="491.6" fill="#dd4c3d" stroke="#b3261b" stroke-width="1"/><circle cx="1011.6" cy="491.6" r="5.7" fill="#a8281e"/>
<use href="#pin" x="1400.5" y="499.9" fill="#dd4c3d" stroke="#b3261b" stroke-width="1"/><circle cx="1400.5" cy="499.9" r="5.7" fill="#a8281e"/>
<use href="#pin" x="1209.9" y="501.2" fill="#dd4c3d" stroke="#b3261b" stroke-width="1"/><circle cx="1209.9" cy="501.2" r="5.7" fill="#a8281e"/>
<use href="#pin" x="1385.6" y="508.2" fill="#dd4c3d" stroke="#b3261b" stroke-width="1"/><circle cx="1385.6" cy="508.2" r="5.7" fill="#a8281e"/>
<use href="#pin" x="1246.3" y="508.3" fill="#dd4c3d" stroke="#b3261b" stroke-width="1"/><circle cx="1246.3" cy="508.3" r="5.7" fill="#a8281e"/>
<use href="#pin" x="1213.6" y="517.4" fill="#dd4c3d" stroke="#b3261b" stroke-width="1"/><circle cx="1213.6" cy="517.4" r="5.7" fill="#a8281e"/>
<use href="#pin" x="1436.4" y="521.3" fill="#dd4c3d" stroke="#b3261b" stroke-width="1"/><circle cx="1436.4" cy="521.3" r="5.7" fill="#a8281e"/>
<use href="#pin" x="1364.2" y="522.8" fill="#dd4c3d" stroke="#b3261b" stroke-width="1"/><circle cx="1364.2" cy="522.8" r="5.7" fill="#a8281e"/>
<use href="#pin" x="1337.0" y="523.5" fill="#dd4c3d" stroke="#b3261b" stroke-width="1"/><circle cx="1337.0" cy="523.5" r="5.7" fill="#a8281e"/>
<use href="#pin" x="1200.2" y="524.4" fill="#dd4c3d" stroke="#b3261b" stroke-width="1"/><circle cx="1200.2" cy="524.4" r="5.7" fill="#a8281e"/>
<use href="#pin" x="1386.7" y="527.2" fill="#dd4c3d" stroke="#b3261b" stroke-width="1"/><circle cx="1386.7" cy="527.2" r="5.7" fill="#a8281e"/>
<use href="#pin" x="650.7" y="532.7" fill="#dd4c3d" stroke="#b3261b" stroke-width="1"/><circle cx="650.7" cy="532.7" r="5.7" fill="#a8281e"/>
<use href="#pin" x="850.8" y="542.5" fill="#dd4c3d" stroke="#b3261b" stroke-width="1"/><circle cx="850.8" cy="542.5" r="5.7" fill="#a8281e"/>
<use href="#pin" x="1292.7" y="553.5" fill="#dd4c3d" stroke="#b3261b" stroke-width="1"/><circle cx="1292.7" cy="553.5" r="5.7" fill="#a8281e"/>
<use href="#pin" x="925.2" y="554.1" fill="#dd4c3d" stroke="#b3261b" stroke-width="1"/><circle cx="925.2" cy="554.1" r="5.7" fill="#a8281e"/>
<use href="#pin" x="1293.3" y="559.0" fill="#dd4c3d" stroke="#b3261b" stroke-width="1"/><circle cx="1293.3" cy="559.0" r="5.7" fill="#a8281e"/>
<use href="#pin" x="1381.7" y="568.1" fill="#dd4c3d" stroke="#b3261b" stroke-width="1"/><circle cx="1381.7" cy="568.1" r="5.7" fill="#a8281e"/>
<use href="#pin" x="1365.5" y="568.4" fill="#dd4c3d" stroke="#b3261b" stroke-width="1"/><circle cx="1365.5" cy="568.4" r="5.7" fill="#a8281e"/>
<use href="#pin" x="1248.7" y="571.5" fill="#dd4c3d" stroke="#b3261b" stroke-width="1"/><circle cx="1248.7" cy="571.5" r="5.7" fill="#a8281e"/>
<use href="#pin" x="1325.0" y="585.9" fill="#dd4c3d" stroke="#b3261b" stroke-width="1"/><circle cx="1325.0" cy="585.9" r="5.7" fill="#a8281e"/>
<use href="#pin" x="1217.5" y="588.0" fill="#dd4c3d" stroke="#b3261b" stroke-width="1"/><circle cx="1217.5" cy="588.0" r="5.7" fill="#a8281e"/>
<use href="#pin" x="1053.6" y="590.7" fill="#dd4c3d" stroke="#b3261b" stroke-width="1"/><circle cx="1053.6" cy="590.7" r="5.7" fill="#a8281e"/>
<use href="#pin" x="849.7" y="591.8" fill="#dd4c3d" stroke="#b3261b" stroke-width="1"/><circle cx="849.7" cy="591.8" r="5.7" fill="#a8281e"/>
<use href="#pin" x="1106.7" y="591.8" fill="#dd4c3d" stroke="#b3261b" stroke-width="1"/><circle cx="1106.7" cy="591.8" r="5.7" fill="#a8281e"/>
<use href="#pin" x="1202.4" y="591.9" fill="#dd4c3d" stroke="#b3261b" stroke-width="1"/><circle cx="1202.4" cy="591.9" r="5.7" fill="#a8281e"/>
<use href="#pin" x="1158.6" y="613.2" fill="#dd4c3d" stroke="#b3261b" stroke-width="1"/><circle cx="1158.6" cy="613.2" r="5.7" fill="#a8281e"/>
<use href="#pin" x="1352.4" y="614.0" fill="#dd4c3d" stroke="#b3261b" stroke-width="1"/><circle cx="1352.4" cy="614.0" r="5.7" fill="#a8281e"/>
<use href="#pin" x="995.8" y="619.1" fill="#dd4c3d" stroke="#b3261b" stroke-width="1"/><circle cx="995.8" cy="619.1" r="5.7" fill="#a8281e"/>
<use href="#pin" x="1130.4" y="629.0" fill="#dd4c3d" stroke="#b3261b" stroke-width="1"/><circle cx="1130.4" cy="629.0" r="5.7" fill="#a8281e"/>
<use href="#pin" x="1049.9" y="646.0" fill="#dd4c3d" stroke="#b3261b" stroke-width="1"/><circle cx="1049.9" cy="646.0" r="5.7" fill="#a8281e"/>
<use href="#pin" x="1202.7" y="649.4" fill="#dd4c3d" stroke="#b3261b" stroke-width="1"/><circle cx="1202.7" cy="649.4" r="5.7" fill="#a8281e"/>
<use href="#pin" x="1281.7" y="655.3" fill="#dd4c3d" stroke="#b3261b" stroke-width="1"/><circle cx="1281.7" cy="655.3" r="5.7" fill="#a8281e"/>
<use href="#pin" x="1243.2" y="657.5" fill="#dd4c3d" stroke="#b3261b" stroke-width="1"/><circle cx="1243.2" cy="657.5" r="5.7" fill="#a8281e"/>
<use href="#pin" x="855.9" y="662.8" fill="#dd4c3d" stroke="#b3261b" stroke-width="1"/><circle cx="855.9" cy="662.8" r="5.7" fill="#a8281e"/>
<use href="#pin" x="899.5" y="663.8" fill="#dd4c3d" stroke="#b3261b" stroke-width="1"/><circle cx="899.5" cy="663.8" r="5.7" fill="#a8281e"/>
<use href="#pin" x="1248.6" y="670.0" fill="#dd4c3d" stroke="#b3261b" stroke-width="1"/><circle cx="1248.6" cy="670.0" r="5.7" fill="#a8281e"/>
<use href="#pin" x="1259.9" y="672.0" fill="#dd4c3d" stroke="#b3261b" stroke-width="1"/><circle cx="1259.9" cy="672.0" r="5.7" fill="#a8281e"/>
<use href="#pin" x="1252.1" y="679.4" fill="#dd4c3d" stroke="#b3261b" stroke-width="1"/><circle cx="1252.1" cy="679.4" r="5.7" fill="#a8281e"/>
<use href="#pin" x="1311.1" y="682.8" fill="#dd4c3d" stroke="#b3261b" stroke-width="1"/><circle cx="1311.1" cy="682.8" r="5.7" fill="#a8281e"/>
<use href="#pin" x="858.8" y="692.0" fill="#dd4c3d" stroke="#b3261b" stroke-width="1"/><circle cx="858.8" cy="692.0" r="5.7" fill="#a8281e"/>
<use href="#pin" x="881.1" y="694.7" fill="#dd4c3d" stroke="#b3261b" stroke-width="1"/><circle cx="881.1" cy="694.7" r="5.7" fill="#a8281e"/>
<use href="#pin" x="858.8" y="701.9" fill="#dd4c3d" stroke="#b3261b" stroke-width="1"/><circle cx="858.8" cy="701.9" r="5.7" fill="#a8281e"/>
<use href="#pin" x="917.3" y="704.0" fill="#dd4c3d" stroke="#b3261b" stroke-width="1"/><circle cx="917.3" cy="704.0" r="5.7" fill="#a8281e"/>
<use href="#pin" x="795.7" y="704.9" fill="#dd4c3d" stroke="#b3261b" stroke-width="1"/><circle cx="795.7" cy="704.9" r="5.7" fill="#a8281e"/>
<use href="#pin" x="1065.8" y="707.1" fill="#dd4c3d" stroke="#b3261b" stroke-width="1"/><circle cx="1065.8" cy="707.1" r="5.7" fill="#a8281e"/>
<use href="#pin" x="1145.5" y="707.1" fill="#dd4c3d" stroke="#b3261b" stroke-width="1"/><circle cx="1145.5" cy="707.1" r="5.7" fill="#a8281e"/>
<use href="#pin" x="874.6" y="710.5" fill="#dd4c3d" stroke="#b3261b" stroke-width="1"/><circle cx="874.6" cy="710.5" r="5.7" fill="#a8281e"/>
<use href="#pin" x="1168.7" y="715.2" fill="#dd4c3d" stroke="#b3261b" stroke-width="1"/><circle cx="1168.7" cy="715.2" r="5.7" fill="#a8281e"/>
<use href="#pin" x="613.0" y="729.4" fill="#dd4c3d" stroke="#b3261b" stroke-width="1"/><circle cx="613.0" cy="729.4" r="5.7" fill="#a8281e"/>
<use href="#pin" x="967.8" y="730.5" fill="#dd4c3d" stroke="#b3261b" stroke-width="1"/><circle cx="967.8" cy="730.5" r="5.7" fill="#a8281e"/>
<use href="#pin" x="1205.8" y="730.5" fill="#dd4c3d" stroke="#b3261b" stroke-width="1"/><circle cx="1205.8" cy="730.5" r="5.7" fill="#a8281e"/>
<use href="#pin" x="1165.2" y="734.2" fill="#dd4c3d" stroke="#b3261b" stroke-width="1"/><circle cx="1165.2" cy="734.2" r="5.7" fill="#a8281e"/>
<use href="#pin" x="1128.6" y="735.5" fill="#dd4c3d" stroke="#b3261b" stroke-width="1"/><circle cx="1128.6" cy="735.5" r="5.7" fill="#a8281e"/>
<use href="#pin" x="1097.6" y="762.2" fill="#dd4c3d" stroke="#b3261b" stroke-width="1"/><circle cx="1097.6" cy="762.2" r="5.7" fill="#a8281e"/>
<use href="#pin" x="984.2" y="773.1" fill="#dd4c3d" stroke="#b3261b" stroke-width="1"/><circle cx="984.2" cy="773.1" r="5.7" fill="#a8281e"/>
<use href="#pin" x="911.4" y="788.0" fill="#dd4c3d" stroke="#b3261b" stroke-width="1"/><circle cx="911.4" cy="788.0" r="5.7" fill="#a8281e"/>
<use href="#pin" x="823.0" y="795.0" fill="#dd4c3d" stroke="#b3261b" stroke-width="1"/><circle cx="823.0" cy="795.0" r="5.7" fill="#a8281e"/>
<use href="#pin" x="1260.5" y="818.0" fill="#dd4c3d" stroke="#b3261b" stroke-width="1"/><circle cx="1260.5" cy="818.0" r="5.7" fill="#a8281e"/>
<use href="#pin" x="1262.7" y="833.0" fill="#dd4c3d" stroke="#b3261b" stroke-width="1"/><circle cx="1262.7" cy="833.0" r="5.7" fill="#a8281e"/>
</g>
</g>
<rect x="527" y="311.6" width="198" height="47" rx="2" fill="#fff" style="filter:drop-shadow(0 1px 1.5px rgba(0,0,0,0.3))"/>
<rect x="607.5" y="311.6" width="1" height="47" fill="#e6e6e6"/>
<text x="547.8" y="341.6" font-family="Liberation Sans" font-weight="bold" font-size="20.3" fill="#111">Map</text>
<text x="629.9" y="341.6" font-family="Liberation Sans" font-size="21" fill="#555">Satellite</text>
<rect x="1506" y="311.7" width="47" height="47" rx="2" fill="#fff" style="filter:drop-shadow(0 1px 1.5px rgba(0,0,0,0.3))"/>
<path d="M1519.5 332v-6.5h6.5M1532.5 325.5h6.5v6.5M1539 338.5v6.5h-6.5M1526 345h-6.5v-6.5" fill="none" stroke="#666" stroke-width="2.6"/>
</svg>
<svg class="a" style="left:1550px;top:730px" width="50" height="70" viewBox="1550 730 50 70">
<defs><linearGradient id="bg1" x1="0" y1="0" x2="1" y2="1"><stop offset="0" stop-color="#7b4ae6"/><stop offset="0.45" stop-color="#4059ea"/><stop offset="1" stop-color="#3f63e6"/></linearGradient>
<filter id="glow" x="-50%" y="-50%" width="200%" height="200%"><feGaussianBlur stdDeviation="2.5"/></filter></defs>
<path d="M1565 744h35v45h-27a9 9 0 0 1-9-9v-34a2 2 0 0 1 1-2z" fill="#6d8cf5" opacity="0.6" filter="url(#glow)"/>
<path d="M1565 744h35v44h-27a9 9 0 0 1-9-9v-33a2 2 0 0 1 1-2z" fill="url(#bg1)"/>
<path d="M1568 783c8-9 20-12 32-11v16h-27a9 9 0 0 1-5-5z" fill="#5bb8ee" opacity="0.9"/>
<circle cx="1583" cy="752.7" r="2.6" fill="none" stroke="#fff" stroke-width="1.8"/>
<rect x="1573" y="759.5" width="20" height="14" rx="1.5" fill="none" stroke="#fff" stroke-width="2.8"/>
<circle cx="1579.5" cy="765.5" r="1.3" fill="#fff"/><circle cx="1586.5" cy="765.5" r="1.3" fill="#fff"/>
</svg>
</body></html>
